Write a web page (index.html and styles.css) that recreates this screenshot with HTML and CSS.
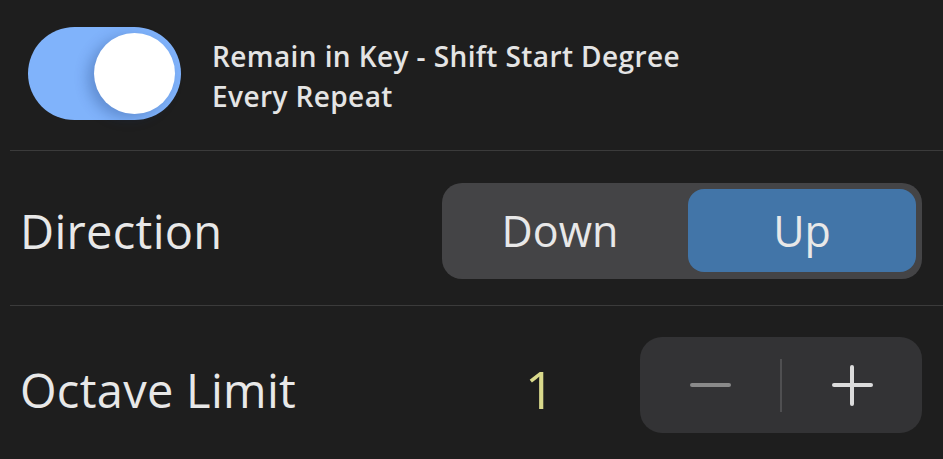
FILE: index.html
```html
<!DOCTYPE html>
<html>
<head>
<meta charset="utf-8">
<link rel="stylesheet" href="styles.css">
</head>
<body>
<div class="panel">
  <div class="row row-toggle">
    <div class="toggle"><div class="knob"></div></div>
    <div class="toggle-label">Remain in Key - Shift Start Degree<br>Every Repeat</div>
  </div>
  <div class="row row-direction">
    <div class="label">Direction</div>
    <div class="segmented">
      <div class="seg seg-down">Down</div>
      <div class="seg seg-up">Up</div>
    </div>
  </div>
  <div class="row row-octave">
    <div class="label label-octave">Octave Limit</div>
    <div class="value">1</div>
    <div class="stepper">
      <div class="step step-minus"><span class="bar-h dim"></span></div>
      <div class="step-sep"></div>
      <div class="step step-plus"><span class="bar-h"></span><span class="bar-v"></span></div>
    </div>
  </div>
</div>
</body>
</html>
```

FILE: styles.css
```css
html, body {
  margin: 0;
  padding: 0;
  background: #1e1e1e;
  width: 943px;
  height: 459px;
  overflow: hidden;
}
body {
  font-family: "Open Sans", "Noto Sans", sans-serif;
  color: #e8e8e8;
}
.panel {
  padding-left: 10px;
}
.row {
  display: flex;
  align-items: center;
}
.row-toggle {
  padding-left: 18px;
  border-bottom: 1px solid #3b3b3b;
  box-sizing: border-box;
  height: 151px;
  padding-bottom: 4px;
}
.toggle {
  width: 153px;
  height: 93px;
  border-radius: 47px;
  background: #80b3fb;
  position: relative;
  flex: none;
}
.knob {
  position: absolute;
  top: 6px;
  right: 6px;
  width: 81px;
  height: 81px;
  border-radius: 50%;
  background: #ffffff;
  box-shadow: -6px 4px 14px rgba(20, 50, 110, 0.3);
}
.toggle-label {
  margin-left: 31px;
  padding-top: 6px;
  font-size: 28px;
  font-weight: 600;
  line-height: 40px;
  color: #e4e4e4;
  letter-spacing: 0.4px;
}
.label {
  font-size: 47px;
  font-weight: 400;
  color: #e8e8e8;
  padding-left: 10px;
  flex: 1;
  letter-spacing: 0.3px;
}
.label-octave {
  padding-top: 9px;
}
.row-direction {
  padding: 32px 21px 26px 0;
  border-bottom: 1px solid #3b3b3b;
}
.segmented {
  width: 480px;
  height: 96px;
  box-sizing: border-box;
  padding: 6px 6px 7px 6px;
  background: #444446;
  border-radius: 20px;
  display: grid;
  grid-template-columns: 1fr 228px;
}
.seg {
  display: flex;
  align-items: center;
  justify-content: center;
  font-size: 43px;
  color: #e8e8e8;
  border-radius: 16px;
}
.seg-down {
  padding-right: 16px;
}
.seg-up {
  background: #4275a8;
}
.row-octave {
  padding: 31px 21px 26px 0;
}
.value {
  font-size: 52px;
  font-weight: 400;
  color: #d9d98b;
  width: 110px;
  padding-top: 6px;
  margin-left: -5px;
  margin-right: 5px;
}
.stepper {
  width: 282px;
  height: 96px;
  background: #333335;
  border-radius: 22px;
  display: flex;
  align-items: center;
}
.step {
  flex: 1;
  height: 100%;
  position: relative;
}
.step-sep {
  width: 2px;
  height: 53px;
  background: #4f4f51;
}
.bar-h {
  position: absolute;
  left: 50%;
  top: 50%;
  width: 41px;
  height: 4px;
  margin-left: -20px;
  margin-top: -2px;
  border-radius: 2px;
  background: #dcdcdc;
}
.bar-h.dim {
  background: #8a8a8a;
}
.bar-v {
  position: absolute;
  left: 50%;
  top: 50%;
  width: 4px;
  height: 41px;
  margin-left: -2px;
  margin-top: -20px;
  border-radius: 2px;
  background: #dcdcdc;
}
```
